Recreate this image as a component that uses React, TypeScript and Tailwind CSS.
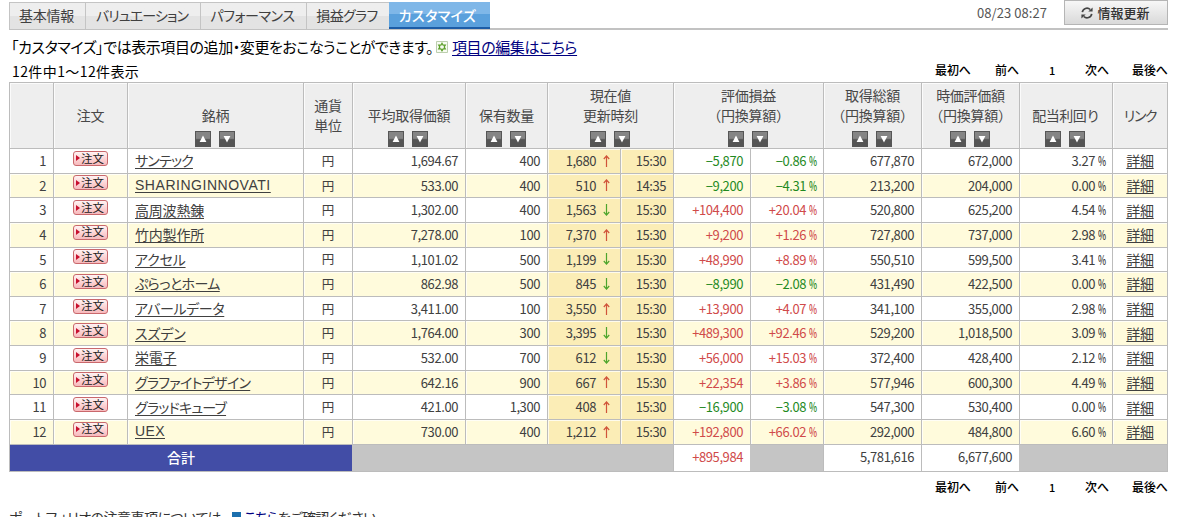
import type { ReactNode } from "react";
import clsx from "clsx";

const COLS = "grid grid-cols-[44px_74px_176px_49px_113px_82px_73px_53px_77px_73px_98px_98px_93px_55px]";
const CELL = "flex items-center border-b border-l border-[#bcbcbc] shadow-[inset_1px_1px_0_rgba(255,255,255,0.75)]";
const NUM = "tracking-[-0.42px] text-[13px]";

type Row = {
  name: string;
  track: string;
  avg: string;
  qty: string;
  price: string;
  up: boolean;
  time: string;
  gain: string;
  rate: string;
  cost: string;
  value: string;
  dividend: string;
};

const rows: Row[] = [
  { name: "サンテック", track: "tracking-[-0.8px]", avg: "1,694.67", qty: "400", price: "1,680", up: true, time: "15:30", gain: "−5,870", rate: "−0.86", cost: "677,870", value: "672,000", dividend: "3.27" },
  { name: "SHARINGINNOVATI", track: "tracking-[0.53px] font-['Liberation_Sans',sans-serif]", avg: "533.00", qty: "400", price: "510", up: true, time: "14:35", gain: "−9,200", rate: "−4.31", cost: "213,200", value: "204,000", dividend: "0.00" },
  { name: "高周波熱錬", track: "tracking-[-0.2px]", avg: "1,302.00", qty: "400", price: "1,563", up: false, time: "15:30", gain: "+104,400", rate: "+20.04", cost: "520,800", value: "625,200", dividend: "4.54" },
  { name: "竹内製作所", track: "tracking-[-0.2px]", avg: "7,278.00", qty: "100", price: "7,370", up: true, time: "15:30", gain: "+9,200", rate: "+1.26", cost: "727,800", value: "737,000", dividend: "2.98" },
  { name: "アクセル", track: "tracking-[-0.2px]", avg: "1,101.02", qty: "500", price: "1,199", up: false, time: "15:30", gain: "+48,990", rate: "+8.89", cost: "550,510", value: "599,500", dividend: "3.41" },
  { name: "ぷらっとホーム", track: "tracking-[-0.6px]", avg: "862.98", qty: "500", price: "845", up: false, time: "15:30", gain: "−8,990", rate: "−2.08", cost: "431,490", value: "422,500", dividend: "0.00" },
  { name: "アバールデータ", track: "tracking-[-0.35px]", avg: "3,411.00", qty: "100", price: "3,550", up: true, time: "15:30", gain: "+13,900", rate: "+4.07", cost: "341,100", value: "355,000", dividend: "2.98" },
  { name: "スズデン", track: "tracking-[-0.1px]", avg: "1,764.00", qty: "300", price: "3,395", up: false, time: "15:30", gain: "+489,300", rate: "+92.46", cost: "529,200", value: "1,018,500", dividend: "3.09" },
  { name: "栄電子", track: "tracking-[-0.2px]", avg: "532.00", qty: "700", price: "612", up: false, time: "15:30", gain: "+56,000", rate: "+15.03", cost: "372,400", value: "428,400", dividend: "2.12" },
  { name: "グラファイトデザイン", track: "tracking-[-0.7px]", avg: "642.16", qty: "900", price: "667", up: true, time: "15:30", gain: "+22,354", rate: "+3.86", cost: "577,946", value: "600,300", dividend: "4.49" },
  { name: "グラッドキューブ", track: "tracking-[-0.75px]", avg: "421.00", qty: "1,300", price: "408", up: true, time: "15:30", gain: "−16,900", rate: "−3.08", cost: "547,300", value: "530,400", dividend: "0.00" },
  { name: "UEX", track: "tracking-[0.4px] font-['Liberation_Sans',sans-serif]", avg: "730.00", qty: "400", price: "1,212", up: true, time: "15:30", gain: "+192,800", rate: "+66.02", cost: "292,000", value: "484,800", dividend: "6.60" },
];

const tabs = [
  { label: "基本情報", size: "w-[76px] tracking-[-0.3px]" },
  { label: "バリュエーション", size: "w-[115px] tracking-[-0.9px]" },
  { label: "パフォーマンス", size: "w-[106px] tracking-[-0.4px]" },
  { label: "損益グラフ", size: "w-[83px] tracking-[-0.6px]" },
];

function Arrow({ up }: { up: boolean }) {
  return (
    <svg className={clsx("ml-[7px] h-3 w-[7px] shrink-0", up ? "text-[#d0543a]" : "rotate-180 text-[#4da52c]")} viewBox="0 0 7 12" fill="none" stroke="currentColor" strokeWidth="1.2">
      <path d="M3.5 12V1M0.8 4L3.5 0.9L6.2 4" />
    </svg>
  );
}

function SortButtons() {
  return (
    <div className="mt-[5px] mr-[2px] flex gap-2">
      {["M8 4.6L11.4 11H4.6Z", "M8 11.4L4.6 5H11.4Z"].map((d) => (
        <button key={d} type="button" className="h-4 w-4 border border-[#565656] bg-linear-to-b from-[#858585] from-45% to-[#555] to-55%">
          <svg className="-m-px h-4 w-4" viewBox="0 0 16 16" fill="white">
            <path d={d} />
          </svg>
        </button>
      ))}
    </div>
  );
}

function Head({ lines = [], sort = false, className }: { lines?: string[]; sort?: boolean; className?: string }) {
  return (
    <div className={clsx(CELL, "flex-col bg-[#eeeeee] text-[14px] leading-5 text-[#484848]", sort ? "justify-end pb-px" : "justify-center", className ?? "tracking-[-0.25px]")}>
      {lines.map((line) => (
        <span key={line} className="-mt-px mb-px whitespace-nowrap">{line}</span>
      ))}
      {sort && <SortButtons />}
    </div>
  );
}

function Num({ children, className }: { children?: ReactNode; className?: string }) {
  return <div className={clsx(CELL, NUM, className ?? "pr-[7px]", "justify-end")}>{children}</div>;
}

function Percent() {
  return <span className="ml-[3px] w-[7px] origin-left scale-x-[0.66] font-medium tracking-normal">%</span>;
}

function Pager() {
  return (
    <nav className="flex w-[233px] whitespace-nowrap text-[12px] font-medium leading-4 tracking-[-0.1px] text-black">
      <span className="w-[60px] shrink-0">最初へ</span>
      <span className="w-[54px] shrink-0">前へ</span>
      <span className="w-[36px] shrink-0 text-[11px]">1</span>
      <span className="w-[47px] shrink-0">次へ</span>
      <span>最後へ</span>
    </nav>
  );
}

function Star() {
  return (
    <svg className="mr-[4px] h-3 w-3 shrink-0" viewBox="0 0 12 12" fill="none">
      <path fill="#f7fbf2" stroke="#bccfae" d="M.5.5h11v11H.5z" />
      <path stroke="#5b9e28" strokeWidth="1.2" d="M6 2.3L7.1 4.2H9.3L8.2 6L9.3 7.9H7.1L6 9.8L4.9 7.9H2.7L3.8 6L2.7 4.2H4.9Z" />
    </svg>
  );
}

export default function App() {
  return (
    <main className="h-[517px] w-[1200px] overflow-hidden bg-white pl-[9px] font-['Noto_Sans_CJK_JP',sans-serif] text-[#404040]">
      <header className="flex h-[30px] w-[1159px] items-start justify-between border-b-2 border-[#c2c2c2]">
        <div className="mt-[2px] -mb-[2px] flex h-[27px] text-[14px] [font-feature-settings:'palt']">
          {tabs.map((tab) => (
            <div key={tab.label} className={clsx("flex items-center justify-center whitespace-nowrap border-l border-t border-[#c4c4c4] bg-linear-to-b from-[#eeeeee] from-50% to-[#e3e3e3] to-50% pr-[2px] pb-[2px]", tab.size)}>
              {tab.label}
            </div>
          ))}
          <div className="flex w-[101px] items-center justify-center border-b-2 border-[#1c5ca6] bg-linear-to-b from-[#7fb7e8] from-50% to-[#5aa0dc] to-50% pt-px pr-[4px] font-medium tracking-[0.4px] text-white">
            カスタマイズ
          </div>
        </div>
        <div className="flex items-start">
          <span className="mr-[17px] mt-[3px] text-[13px] leading-[19px] tracking-[0.05px] text-[#555]">08/23 08:27</span>
          <button type="button" className="flex h-[25px] w-[104px] items-center justify-center border border-[#b5b5b5] bg-linear-to-b from-[#f7f7f7] to-[#d9d9d9] pr-px text-[13px] font-medium text-[#333]">
            <svg className="mr-1 h-3 w-3" viewBox="0 0 12 12" fill="none" stroke="#444" strokeWidth="1.7">
              <path d="M1.3 5.2A4.7 4.7 0 0 1 9.2 2.5M10.7 6.8A4.7 4.7 0 0 1 2.8 9.5" />
              <path fill="#444" stroke="none" d="M7.3 4.6H11.6V.4ZM4.7 7.4H.4v4.2Z" />
            </svg>
            情報更新
          </button>
        </div>
      </header>

      <p className="ml-[2px] mt-[6px] flex h-[22px] items-center whitespace-nowrap text-[15px] text-black [font-feature-settings:'palt']">
        <span className="w-[425px] shrink-0 tracking-[-0.42px]">「カスタマイズ」では表示項目の追加・変更をおこなうことができます。</span>
        <Star />
        <a className="tracking-[-0.4px] text-[#000080] underline underline-offset-2">項目の編集はこちら</a>
      </p>

      <div className="flex h-6 w-[1159px] items-center justify-between">
        <span className="ml-[3px] mt-[2px] text-[14px] tracking-[0.4px] text-black">12件中1〜12件表示</span>
        <Pager />
      </div>

      <section className="w-[1159px] border-r border-t border-[#bcbcbc]">
        <div className={clsx(COLS, "h-[66px]")}>
          <Head />
          <Head lines={["注文"]} />
          <Head lines={["銘柄"]} sort />
          <Head lines={["通貨", "単位"]} />
          <Head lines={["平均取得価額"]} sort />
          <Head lines={["保有数量"]} sort />
          <Head lines={["現在値", "更新時刻"]} sort className="col-span-2 tracking-[-0.25px]" />
          <Head lines={["評価損益", "（円換算額）"]} sort className="col-span-2 tracking-[-0.25px]" />
          <Head lines={["取得総額", "（円換算額）"]} sort />
          <Head lines={["時価評価額", "（円換算額）"]} sort />
          <Head lines={["配当利回り"]} sort className="tracking-[-0.5px]" />
          <Head lines={["リンク"]} className="tracking-[-1.4px] [font-feature-settings:'palt']" />
        </div>

        {rows.map((row, i) => {
          const tone = row.gain.startsWith("+") ? "pr-[7px] text-[#d04a4a]" : "pr-[7px] text-[#1f8a1f]";
          return (
            <div key={row.name} className={clsx(COLS, "h-[24.64px]", i % 2 ? "bg-[#fffbdc]" : "bg-white")}>
              <Num>{i + 1}</Num>
              <div className={clsx(CELL, "justify-center")}>
                <button type="button" className="mb-[5px] flex h-[15px] w-[35px] items-center justify-center rounded-[3px] border border-[#c9686c] bg-linear-to-b from-[#fff3f3] to-[#f7b9bc] pr-px text-[11.5px] leading-none text-[#222]">
                  <svg className="mr-px h-[6px] w-1" viewBox="0 0 4 6" fill="#c8102e">
                    <path d="M0 0L4 3L0 6Z" />
                  </svg>
                  注文
                </button>
              </div>
              <div className={clsx(CELL, "pl-[7px]")}>
                <a className={clsx("whitespace-nowrap text-[14px] underline underline-offset-2 [font-feature-settings:'palt']", row.track)}>{row.name}</a>
              </div>
              <div className={clsx(CELL, "justify-center pt-px text-[12.5px]")}>円</div>
              <Num>{row.avg}</Num>
              <Num>{row.qty}</Num>
              <Num className="bg-[#fbedb6] pr-[10px]">
                {row.price}
                <Arrow up={row.up} />
              </Num>
              <Num className="bg-[#fbedb6] pr-[7px]">{row.time}</Num>
              <Num className={tone}>{row.gain}</Num>
              <Num className={tone}>
                {row.rate}
                <Percent />
              </Num>
              <Num>{row.cost}</Num>
              <Num>{row.value}</Num>
              <Num>
                {row.dividend}
                <Percent />
              </Num>
              <div className={clsx(CELL, "justify-center text-[14px] tracking-[-0.3px]")}>
                <a className="underline underline-offset-2">詳細</a>
              </div>
            </div>
          );
        })}

        <div className={clsx(COLS, "h-[27px]")}>
          <div className="col-span-4 flex items-center justify-center border-b border-l border-[#bcbcbc] bg-[#424da6] text-[14px] font-medium text-white">合計</div>
          <div className="col-span-4 border-b border-[#bcbcbc] bg-[#c5c5c5]" />
          <Num className="pr-[7px] pb-[2px] text-[#d04a4a]">+895,984</Num>
          <div className="border-b border-[#bcbcbc] bg-[#c5c5c5]" />
          <Num className="pr-[7px] pb-[2px]">5,781,616</Num>
          <Num className="pr-[7px] pb-[2px]">6,677,600</Num>
          <div className="col-span-2 border-b border-[#bcbcbc] bg-[#c5c5c5]" />
        </div>
      </section>

      <div className="flex w-[1159px] justify-end pt-[7px]">
        <Pager />
      </div>

      <p className="mt-[12px] flex items-center whitespace-nowrap text-[14px] leading-5 text-[#333] [font-feature-settings:'palt']">
        <span className="w-[223px] shrink-0 tracking-[-0.5px]">ポートフォリオの注意事項については、</span>
        <span className="mr-[3px] h-[9px] w-[9px] bg-[#1c6fae]" />
        <a className="tracking-[-0.9px] text-[#000080] underline">こちら</a>
        <span className="tracking-[-0.6px]">をご確認ください。</span>
      </p>
    </main>
  );
}
